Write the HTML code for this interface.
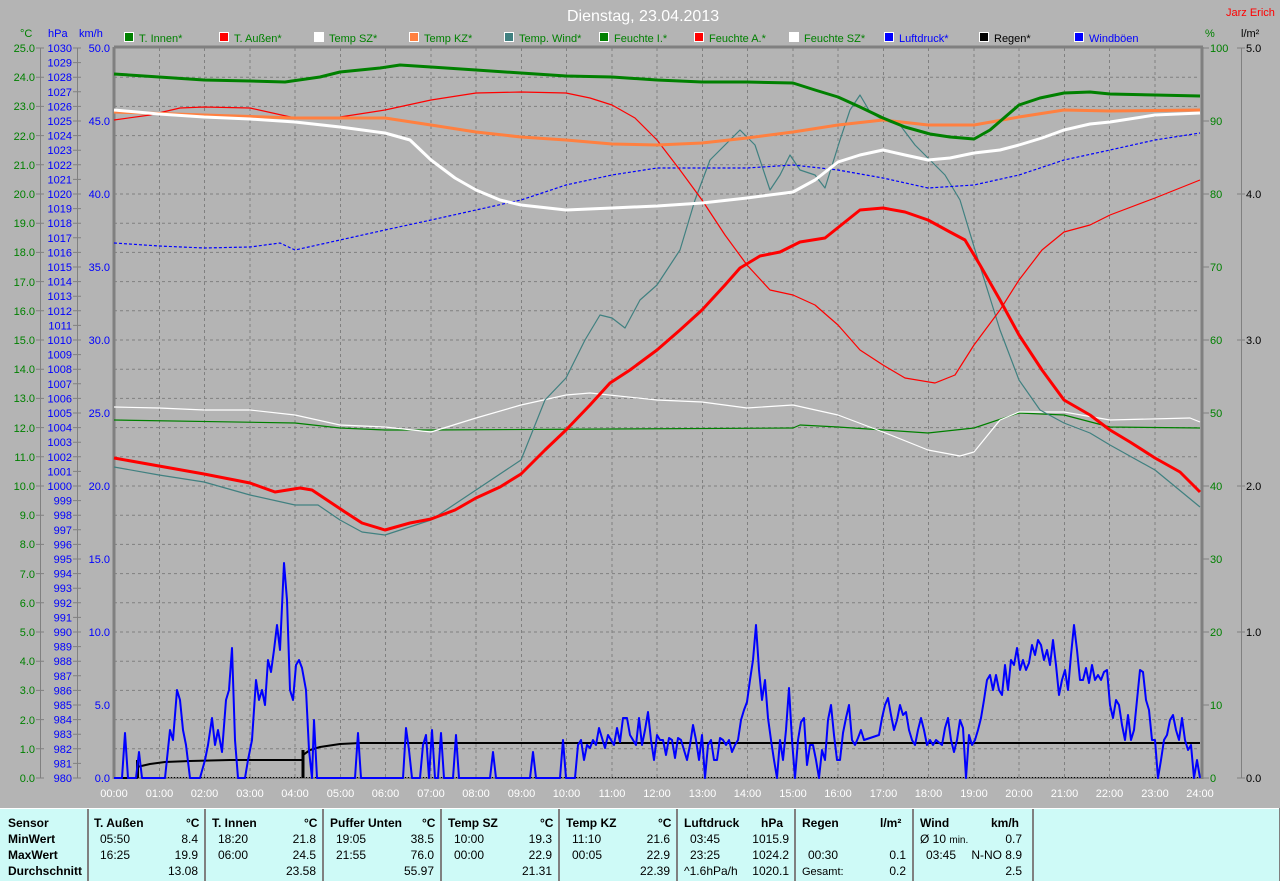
<!DOCTYPE html>
<html><head><meta charset="utf-8"><style>
html,body{margin:0;padding:0;background:#b4b4b4;width:1280px;height:881px;overflow:hidden}
svg{display:block;font-family:"Liberation Sans",sans-serif}
.t{font-family:"Liberation Sans",sans-serif;font-size:12px}
</style></head><body>
<svg width="1280" height="881" viewBox="0 0 1280 881">
<rect width="1280" height="881" fill="#b4b4b4"/>
<text x="567" y="21" font-size="16" fill="#fff">Dienstag, 23.04.2013</text>
<text x="1226" y="16" font-size="11" fill="#f00">Jarz Erich</text>
<!-- legend -->
<g font-size="11">
<rect x="124.5" y="32.5" width="9" height="9" fill="#008000" stroke="#fff"/><text x="139" y="42" fill="#008000">T. Innen*</text>
<rect x="219.5" y="32.5" width="9" height="9" fill="#f00" stroke="#fff"/><text x="234" y="42" fill="#008000">T. Außen*</text>
<rect x="314.5" y="32.5" width="9" height="9" fill="#fff" stroke="#fff"/><text x="329" y="42" fill="#008000">Temp SZ*</text>
<rect x="409.5" y="32.5" width="9" height="9" fill="#ff8040" stroke="#fff"/><text x="424" y="42" fill="#008000">Temp KZ*</text>
<rect x="504.5" y="32.5" width="9" height="9" fill="#408080" stroke="#fff"/><text x="519" y="42" fill="#008000">Temp. Wind*</text>
<rect x="599.5" y="32.5" width="9" height="9" fill="#008000" stroke="#fff"/><text x="614" y="42" fill="#008000">Feuchte I.*</text>
<rect x="694.5" y="32.5" width="9" height="9" fill="#f00" stroke="#fff"/><text x="709" y="42" fill="#008000">Feuchte A.*</text>
<rect x="789.5" y="32.5" width="9" height="9" fill="#fff" stroke="#fff"/><text x="804" y="42" fill="#008000">Feuchte SZ*</text>
<rect x="884.5" y="32.5" width="9" height="9" fill="#00f" stroke="#fff"/><text x="899" y="42" fill="#00f">Luftdruck*</text>
<rect x="979.5" y="32.5" width="9" height="9" fill="#000" stroke="#fff"/><text x="994" y="42" fill="#000">Regen*</text>
<rect x="1074.5" y="32.5" width="9" height="9" fill="#00f" stroke="#fff"/><text x="1089" y="42" fill="#00f">Windböen</text>
</g>
<!-- axis titles -->
<g font-size="11">
<text x="20" y="37" fill="#008000">°C</text>
<text x="48" y="37" fill="#00f">hPa</text>
<text x="79" y="37" fill="#00f">km/h</text>
<text x="1205" y="37" fill="#008000">%</text>
<text x="1241" y="37" fill="#000">l/m²</text>
</g>
<!-- grid -->
<g stroke="#808080" stroke-dasharray="3,3" stroke-width="1">
<path d="M114 77.2H1200M114 106.4H1200M114 135.6H1200M114 164.8H1200M114 194H1200M114 223.2H1200M114 252.4H1200M114 281.6H1200M114 310.8H1200M114 340H1200M114 369.2H1200M114 398.4H1200M114 427.6H1200M114 456.8H1200M114 486H1200M114 515.2H1200M114 544.4H1200M114 573.6H1200M114 602.8H1200M114 632H1200M114 661.2H1200M114 690.4H1200M114 719.6H1200M114 748.8H1200"/>
<path d="M159.5 48V778M204.5 48V778M250 48V778M295 48V778M340.5 48V778M385.5 48V778M431 48V778M476 48V778M521.5 48V778M566.5 48V778M612 48V778M657 48V778M702.5 48V778M747.5 48V778M793 48V778M838 48V778M883.5 48V778M928.5 48V778M974 48V778M1019 48V778M1064.5 48V778M1109.5 48V778M1155 48V778"/>
</g>
<!-- axes lines -->
<g stroke="#808080" fill="none">
<path d="M114 47H1203" stroke-width="3"/>
<path d="M114 47V779" stroke-width="3"/>
<path d="M1202 47V779" stroke-width="3"/>
<path d="M40.5 48V778M77.5 48V778M1241.5 48V778" stroke-width="1"/>
<path d="M114 778H1202" stroke-width="2"/>
</g>
<path d="M114 777.5H1200" stroke="#000" stroke-dasharray="1,2"/>
<!-- ticks -->
<g stroke="#808080">
<path d="M36 48h8M36 77.2h8M36 106.4h8M36 135.6h8M36 164.8h8M36 194h8M36 223.2h8M36 252.4h8M36 281.6h8M36 310.8h8M36 340h8M36 369.2h8M36 398.4h8M36 427.6h8M36 456.8h8M36 486h8M36 515.2h8M36 544.4h8M36 573.6h8M36 602.8h8M36 632h8M36 661.2h8M36 690.4h8M36 719.6h8M36 748.8h8M36 778h8"/>
<path d="M73 48h8M73 62.6h8M73 77.2h8M73 91.8h8M73 106.4h8M73 121h8M73 135.6h8M73 150.2h8M73 164.8h8M73 179.4h8M73 194h8M73 208.6h8M73 223.2h8M73 237.8h8M73 252.4h8M73 267h8M73 281.6h8M73 296.2h8M73 310.8h8M73 325.4h8M73 340h8M73 354.6h8M73 369.2h8M73 383.8h8M73 398.4h8M73 413h8M73 427.6h8M73 442.2h8M73 456.8h8M73 471.4h8M73 486h8M73 500.6h8M73 515.2h8M73 529.8h8M73 544.4h8M73 559h8M73 573.6h8M73 588.2h8M73 602.8h8M73 617.4h8M73 632h8M73 646.6h8M73 661.2h8M73 675.8h8M73 690.4h8M73 705h8M73 719.6h8M73 734.2h8M73 748.8h8M73 763.4h8M73 778h8"/>
<path d="M1203 48h6M1203 121h6M1203 194h6M1203 267h6M1203 340h6M1203 413h6M1203 486h6M1203 559h6M1203 632h6M1203 705h6M1203 778h6"/>
<path d="M1237 48h8M1237 194h8M1237 340h8M1237 486h8M1237 632h8M1237 778h8"/>
</g>
<!-- °C labels -->
<g font-size="11" fill="#008000" text-anchor="end">
<text x="35" y="52">25.0</text><text x="35" y="81">24.0</text><text x="35" y="110">23.0</text><text x="35" y="140">22.0</text><text x="35" y="169">21.0</text><text x="35" y="198">20.0</text><text x="35" y="227">19.0</text><text x="35" y="256">18.0</text><text x="35" y="286">17.0</text><text x="35" y="315">16.0</text><text x="35" y="344">15.0</text><text x="35" y="373">14.0</text><text x="35" y="402">13.0</text><text x="35" y="432">12.0</text><text x="35" y="461">11.0</text><text x="35" y="490">10.0</text><text x="35" y="519">9.0</text><text x="35" y="548">8.0</text><text x="35" y="578">7.0</text><text x="35" y="607">6.0</text><text x="35" y="636">5.0</text><text x="35" y="665">4.0</text><text x="35" y="694">3.0</text><text x="35" y="724">2.0</text><text x="35" y="753">1.0</text><text x="35" y="782">0.0</text>
</g>
<!-- hPa labels -->
<g font-size="11" fill="#00f" text-anchor="end">
<text x="72" y="52">1030</text><text x="72" y="66.6">1029</text><text x="72" y="81.2">1028</text><text x="72" y="95.8">1027</text><text x="72" y="110.4">1026</text><text x="72" y="125">1025</text><text x="72" y="139.6">1024</text><text x="72" y="154.2">1023</text><text x="72" y="168.8">1022</text><text x="72" y="183.4">1021</text><text x="72" y="198">1020</text><text x="72" y="212.6">1019</text><text x="72" y="227.2">1018</text><text x="72" y="241.8">1017</text><text x="72" y="256.4">1016</text><text x="72" y="271">1015</text><text x="72" y="285.6">1014</text><text x="72" y="300.2">1013</text><text x="72" y="314.8">1012</text><text x="72" y="329.4">1011</text><text x="72" y="344">1010</text><text x="72" y="358.6">1009</text><text x="72" y="373.2">1008</text><text x="72" y="387.8">1007</text><text x="72" y="402.4">1006</text><text x="72" y="417">1005</text><text x="72" y="431.6">1004</text><text x="72" y="446.2">1003</text><text x="72" y="460.8">1002</text><text x="72" y="475.4">1001</text><text x="72" y="490">1000</text><text x="72" y="504.6">999</text><text x="72" y="519.2">998</text><text x="72" y="533.8">997</text><text x="72" y="548.4">996</text><text x="72" y="563">995</text><text x="72" y="577.6">994</text><text x="72" y="592.2">993</text><text x="72" y="606.8">992</text><text x="72" y="621.4">991</text><text x="72" y="636">990</text><text x="72" y="650.6">989</text><text x="72" y="665.2">988</text><text x="72" y="679.8">987</text><text x="72" y="694.4">986</text><text x="72" y="709">985</text><text x="72" y="723.6">984</text><text x="72" y="738.2">983</text><text x="72" y="752.8">982</text><text x="72" y="767.4">981</text><text x="72" y="782">980</text>
</g>
<!-- km/h labels -->
<g font-size="11" fill="#00f" text-anchor="end">
<text x="110" y="52">50.0</text><text x="110" y="125">45.0</text><text x="110" y="198">40.0</text><text x="110" y="271">35.0</text><text x="110" y="344">30.0</text><text x="110" y="417">25.0</text><text x="110" y="490">20.0</text><text x="110" y="563">15.0</text><text x="110" y="636">10.0</text><text x="110" y="709">5.0</text><text x="110" y="782">0.0</text>
</g>
<!-- % labels -->
<g font-size="11" fill="#008000">
<text x="1210" y="52">100</text><text x="1210" y="125">90</text><text x="1210" y="198">80</text><text x="1210" y="271">70</text><text x="1210" y="344">60</text><text x="1210" y="417">50</text><text x="1210" y="490">40</text><text x="1210" y="563">30</text><text x="1210" y="636">20</text><text x="1210" y="709">10</text><text x="1210" y="782">0</text>
</g>
<g font-size="11" fill="#000">
<text x="1246" y="52">5.0</text><text x="1246" y="198">4.0</text><text x="1246" y="344">3.0</text><text x="1246" y="490">2.0</text><text x="1246" y="636">1.0</text><text x="1246" y="782">0.0</text>
</g>
<!-- x labels -->
<g font-size="11" fill="#fff" text-anchor="middle">
<text x="114" y="797">00:00</text><text x="159.5" y="797">01:00</text><text x="204.5" y="797">02:00</text><text x="250" y="797">03:00</text><text x="295" y="797">04:00</text><text x="340.5" y="797">05:00</text><text x="385.5" y="797">06:00</text><text x="431" y="797">07:00</text><text x="476" y="797">08:00</text><text x="521.5" y="797">09:00</text><text x="566.5" y="797">10:00</text><text x="612" y="797">11:00</text><text x="657" y="797">12:00</text><text x="702.5" y="797">13:00</text><text x="747.5" y="797">14:00</text><text x="793" y="797">15:00</text><text x="838" y="797">16:00</text><text x="883.5" y="797">17:00</text><text x="928.5" y="797">18:00</text><text x="974" y="797">19:00</text><text x="1019" y="797">20:00</text><text x="1064.5" y="797">21:00</text><text x="1109.5" y="797">22:00</text><text x="1155" y="797">23:00</text><text x="1200" y="797">24:00</text>
</g>
<!-- curves -->
<g fill="none" stroke-linejoin="round">
<!-- Feuchte I -->
<polyline stroke="#008000" stroke-width="1.2" points="114,420 295,423 340,428 385,430 431,430 612,429 793,428 800,425 838,427 883,430 928,433 974,428 1019,413 1064,415 1110,427 1200,428"/>
<!-- Feuchte SZ -->
<polyline stroke="#fff" stroke-width="1.2" points="114,407 159,408 204,410 250,410 295,415 340,425 385,427 431,432 476,418 521,405 566,395 590,393 657,400 702,402 747,408 793,405 838,415 883,432 928,450 960,456 974,452 1000,420 1019,412 1064,412 1110,420 1190,418 1200,422"/>
<!-- Temp Wind -->
<polyline stroke="#408080" stroke-width="1.2" points="114,467 159,475 204,482 250,495 295,505 318,505 340,520 362,532 385,535 431,520 476,490 521,460 545,400 566,378 585,340 600,315 612,318 625,328 640,300 657,285 680,250 695,200 710,160 725,145 740,130 755,145 770,190 780,175 790,155 800,170 815,175 825,188 840,140 850,110 860,95 870,112 883,120 900,125 915,145 930,160 945,175 960,200 975,250 1000,330 1019,380 1040,410 1064,423 1090,433 1110,445 1155,470 1200,507"/>
<!-- Luftdruck -->
<polyline stroke="#00f" stroke-width="1.2" stroke-dasharray="3,2" points="114,243 159,246 204,248 250,247 280,243 295,250 340,240 385,230 431,220 476,210 521,200 566,185 612,175 657,168 702,168 747,168 793,165 838,170 883,178 928,188 974,185 1019,175 1064,160 1110,150 1155,140 1200,133"/>
<!-- Feuchte A thin red -->
<polyline stroke="#f00" stroke-width="1.2" points="114,120 150,115 180,108 204,107 250,108 295,118 340,117 385,110 431,100 476,93 521,92 566,93 590,98 612,105 635,118 657,140 680,170 702,200 725,235 747,265 770,290 793,295 815,305 838,325 860,350 883,365 905,378 935,383 955,375 974,345 1000,310 1019,280 1042,250 1064,232 1090,225 1110,215 1155,198 1200,180"/>
<!-- Temp KZ orange -->
<polyline stroke="#ff8040" stroke-width="3" points="114,112 204,115 295,118 340,118 385,118 431,125 476,132 521,137 566,140 612,144 657,145 702,143 747,138 793,132 838,125 883,120 928,125 974,125 1019,117 1064,110 1110,111 1200,110"/>
<!-- Temp SZ white -->
<polyline stroke="#fff" stroke-width="3" points="114,110 159,114 204,117 250,119 295,122 340,127 385,133 410,140 431,160 455,178 476,190 500,200 521,205 566,210 612,208 657,206 702,203 747,198 793,192 815,180 838,162 860,155 883,150 905,155 928,160 950,158 974,153 1000,150 1019,145 1042,138 1064,130 1090,124 1110,122 1155,115 1200,113"/>
<!-- T Innen green -->
<polyline stroke="#008000" stroke-width="3" points="114,74 159,77 204,80 250,81 285,82 320,77 340,72 380,68 400,65 431,67 476,70 521,73 566,76 612,77 657,80 702,82 747,82 793,83 815,90 838,97 860,107 883,118 905,127 930,134 950,137 974,139 990,130 1019,105 1040,98 1064,93 1090,92 1110,94 1155,95 1200,96"/>
<!-- T Außen red -->
<polyline stroke="#f00" stroke-width="3" points="114,458 159,466 204,474 250,483 275,492 300,488 312,490 330,502 345,512 362,523 385,530 410,523 431,519 455,510 476,498 500,487 521,474 545,450 566,430 590,405 610,383 630,370 657,350 680,330 702,310 725,285 740,268 760,256 780,252 800,242 825,238 845,222 860,210 883,208 905,212 928,220 950,232 965,240 980,265 1000,300 1019,335 1042,370 1064,400 1090,415 1110,430 1130,442 1155,458 1180,472 1200,492"/>
<!-- Regen -->
<polyline stroke="#000" stroke-width="2" points="114,778 137,778 137,767 150,764 165,762 190,761 230,760 302,760"/>
<path d="M137.5 760V778M303 750V778" stroke="#000" stroke-width="3"/>
<polyline stroke="#000" stroke-width="2" points="303,755 310,750 320,747 340,744 360,743 1200,743"/>
<!-- Windböen -->
<polyline stroke="#00f" stroke-width="2" points="114,778 122,778 125,733 128,778 136,778 139,752 142,778 165,778 170,730 173,740 177,690 180,700 183,730 186,745 190,778 200,778 205,760 208,745 212,718 215,745 218,730 222,752 226,700 229,690 232,648 235,740 238,778 245,778 248,760 252,740 256,680 259,700 262,690 265,705 268,660 271,672 274,650 277,625 280,650 284,563 287,600 290,690 293,700 296,665 299,660 302,668 306,690 309,750 312,778 314,720 317,778 355,778 358,733 361,778 403,778 406,728 409,750 412,778 420,778 423,745 426,735 429,778 432,730 435,778 438,778 441,733 444,778 453,778 456,735 459,778 490,778 493,752 496,778 530,778 533,752 536,778 560,778 563,740 566,778 575,778 578,745 581,740 584,760 587,745 590,748 593,740 596,745 599,728 602,738 605,748 608,735 611,740 614,745 617,728 620,742 623,718 627,718 630,735 633,740 636,745 639,718 642,745 645,730 648,712 651,740 654,760 657,735 660,740 663,740 666,755 669,738 672,740 675,758 678,738 681,740 684,750 687,760 690,745 693,725 696,740 699,760 702,735 705,778 708,745 711,740 714,760 717,760 720,738 723,740 726,745 729,740 732,752 735,745 738,740 741,720 744,710 747,702 750,680 753,660 756,625 759,670 762,700 765,680 768,718 771,740 774,760 777,778 780,740 783,760 786,730 789,688 792,740 795,778 798,740 801,722 804,718 807,765 810,745 813,745 816,760 819,778 822,750 825,760 828,720 831,705 834,735 837,760 840,760 843,733 846,718 849,705 852,740 855,745 858,738 861,730 864,740 879,735 882,718 885,705 888,698 891,715 894,730 897,720 900,705 903,715 906,712 909,730 912,740 915,745 918,730 921,718 924,730 927,745 930,740 933,745 936,740 942,745 945,728 948,718 951,740 954,752 957,740 960,720 963,728 966,778 969,735 972,745 975,740 978,730 981,718 984,700 987,680 990,675 993,690 996,675 999,690 1002,695 1005,665 1008,690 1011,660 1014,665 1017,648 1020,670 1023,660 1026,670 1029,663 1032,645 1035,655 1038,640 1041,645 1044,660 1047,650 1050,665 1053,640 1056,665 1059,695 1062,680 1065,670 1068,690 1071,655 1074,625 1077,650 1080,680 1083,680 1086,668 1089,683 1092,665 1095,680 1098,675 1101,680 1104,672 1107,670 1110,705 1113,718 1116,700 1119,705 1122,725 1125,740 1128,715 1131,740 1134,730 1137,700 1140,670 1143,672 1146,700 1149,710 1152,740 1155,740 1158,778 1161,760 1164,740 1167,735 1170,720 1173,715 1176,730 1179,740 1182,718 1185,740 1188,750 1191,745 1194,778 1197,760 1200,778"/>
</g>
<!-- table -->
<rect x="0" y="808" width="1279" height="73" fill="#cefaf7"/>
<path d="M0 808.5H1279" stroke="#fff"/>
<path d="M1279.5 808V881" stroke="#808080"/>
<g stroke="#808080" stroke-width="2">
<path d="M88 809V881M205 809V881M323 809V881M441 809V881M559 809V881M677 809V881M795 809V881M913 809V881M1033 809V881"/>
</g>
<g font-size="12" fill="#000">
<g font-weight="bold">
<text x="8" y="827">Sensor</text><text x="8" y="843">MinWert</text><text x="8" y="859">MaxWert</text><text x="8" y="875">Durchschnitt</text>
<text x="94" y="827">T. Außen</text><text x="186" y="827">°C</text>
<text x="212" y="827">T. Innen</text><text x="304" y="827">°C</text>
<text x="330" y="827">Puffer Unten</text><text x="422" y="827">°C</text>
<text x="448" y="827">Temp SZ</text><text x="540" y="827">°C</text>
<text x="566" y="827">Temp KZ</text><text x="658" y="827">°C</text>
<text x="684" y="827">Luftdruck</text><text x="761" y="827">hPa</text>
<text x="802" y="827">Regen</text><text x="880" y="827">l/m²</text>
<text x="920" y="827">Wind</text><text x="991" y="827">km/h</text>
</g>
<text x="100" y="843">05:50</text><text x="198" y="843" text-anchor="end">8.4</text>
<text x="100" y="859">16:25</text><text x="198" y="859" text-anchor="end">19.9</text>
<text x="198" y="875" text-anchor="end">13.08</text>
<text x="218" y="843">18:20</text><text x="316" y="843" text-anchor="end">21.8</text>
<text x="218" y="859">06:00</text><text x="316" y="859" text-anchor="end">24.5</text>
<text x="316" y="875" text-anchor="end">23.58</text>
<text x="336" y="843">19:05</text><text x="434" y="843" text-anchor="end">38.5</text>
<text x="336" y="859">21:55</text><text x="434" y="859" text-anchor="end">76.0</text>
<text x="434" y="875" text-anchor="end">55.97</text>
<text x="454" y="843">10:00</text><text x="552" y="843" text-anchor="end">19.3</text>
<text x="454" y="859">00:00</text><text x="552" y="859" text-anchor="end">22.9</text>
<text x="552" y="875" text-anchor="end">21.31</text>
<text x="572" y="843">11:10</text><text x="670" y="843" text-anchor="end">21.6</text>
<text x="572" y="859">00:05</text><text x="670" y="859" text-anchor="end">22.9</text>
<text x="670" y="875" text-anchor="end">22.39</text>
<text x="690" y="843">03:45</text><text x="789" y="843" text-anchor="end">1015.9</text>
<text x="690" y="859">23:25</text><text x="789" y="859" text-anchor="end">1024.2</text>
<text x="684" y="875">^1.6hPa/h</text><text x="789" y="875" text-anchor="end">1020.1</text>
<text x="808" y="859">00:30</text><text x="906" y="859" text-anchor="end">0.1</text>
<text x="802" y="875" font-size="11">Gesamt:</text><text x="906" y="875" text-anchor="end">0.2</text>
<text x="920" y="843">Ø 10 <tspan font-size="10">min.</tspan></text><text x="1022" y="843" text-anchor="end">0.7</text>
<text x="926" y="859">03:45</text><text x="1022" y="859" text-anchor="end">N-NO 8.9</text>
<text x="1022" y="875" text-anchor="end">2.5</text>
</g>
</svg>
</body></html>
